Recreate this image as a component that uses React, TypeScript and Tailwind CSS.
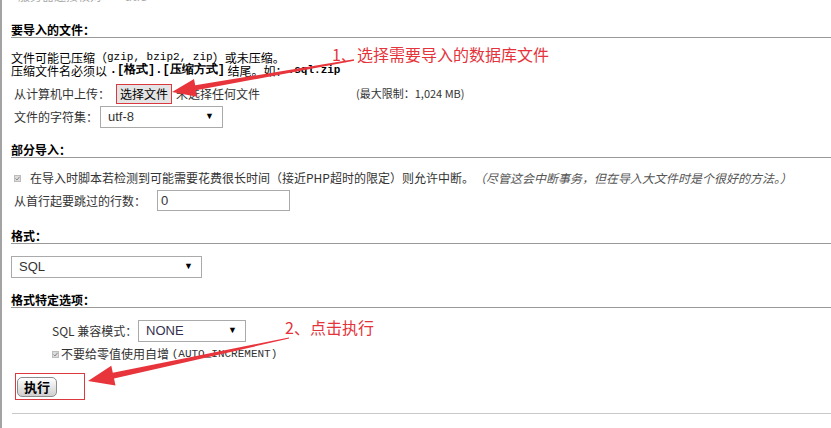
import React from 'react';

const sans = "font-['Noto_Sans_CJK_SC',sans-serif]";

function Heading({ children, className }: { children: React.ReactNode; className: string }) {
  return (
    <div className={`${className} h-[16px] border-b border-[#999] text-[12px] font-bold leading-[15px] text-black`}>
      {children}
    </div>
  );
}

function Select({ value, className }: { value: string; className: string }) {
  return (
    <div
      className={`${className} flex h-[22px] items-center justify-between border border-[#aaa] bg-white pl-[7px] pr-[8px] font-['Liberation_Sans',sans-serif] text-[13px] text-[#333]`}
    >
      <span>{value}</span>
      <span className="text-[9px] text-black">▼</span>
    </div>
  );
}

function Tick() {
  return (
    <span className="flex h-[7px] w-[7px] shrink-0 items-center justify-center border border-[#bdbdbd] bg-[#dcdcdc]">
      <svg width="5" height="5" viewBox="0 0 5 5">
        <path d="M0.5 2.5 L2 4 L4.5 0.8" stroke="#8a8a8a" strokeWidth="1" fill="none" />
      </svg>
    </span>
  );
}

export default function App() {
  return (
    <div className={`relative h-[428px] w-[831px] overflow-hidden border-l-2 border-[#a3a3a3] bg-white pl-[9px] text-[12px] text-[#222] ${sans}`}>
      {/* row cut off at the top edge */}
      <div className="h-[4px] overflow-hidden">
        <div className="-mt-[11px] h-[14px] pl-[7px] leading-[14px] text-[#aaa]">
          服务器连接校对 <span className="ml-[20px]">utf8</span>
        </div>
      </div>

      <Heading className="mt-[18px]">要导入的文件：</Heading>

      <div className="mt-[13px] leading-[13px] text-black">
        <div className="flex h-[13px] items-center whitespace-pre">
          文件可能已压缩（<span className="font-['Liberation_Mono',monospace] text-[11px]">gzip, bzip2, zip</span>）或未压缩。
        </div>
        <div className="flex h-[13px] items-center whitespace-pre">
          压缩文件名必须以 <span className="font-['Liberation_Mono',monospace] font-bold">.[格式].[压缩方式]</span> 结尾。如：
          <span className="font-['Liberation_Mono',monospace] text-[11px] font-bold">.sql.zip</span>
        </div>
      </div>

      <div className="mt-[6px] flex h-[21px] items-center pl-[3px] text-[#333]">
        <div className="flex w-[342px] items-center">
          <span className="w-[102px]">从计算机中上传：</span>
          <span className="flex h-[20px] items-center border border-[#d9393f] bg-[#e4e4e4] px-[3px] text-[12px] text-black">
            选择文件
          </span>
          <span className="ml-[4px]">未选择任何文件</span>
        </div>
        <span className="text-[11px] text-[#333]">(最大限制：1,024 MB)</span>
      </div>

      <div className="mt-[2px] flex h-[22px] items-center pl-[3px] text-[#333]">
        <span className="w-[86px]">文件的字符集：</span>
        <Select value="utf-8" className="w-[123px]" />
      </div>

      <Heading className="mt-[14px]">部分导入：</Heading>

      <div className="mt-[12px] flex h-[16px] items-center pl-[3px] text-[#333]">
        <Tick />
        <span className="ml-[9px]">在导入时脚本若检测到可能需要花费很长时间（接近PHP超时的限定）则允许中断。</span>
        <span className="italic text-[#555]">（尽管这会中断事务，但在导入大文件时是个很好的方法。）</span>
      </div>

      <div className="mt-[4px] flex h-[21px] items-center pl-[3px] text-[#333]">
        <span className="w-[143px]">从首行起要跳过的行数：</span>
        <div className="flex h-[21px] w-[133px] items-center border border-[#aaa] pl-[3px] font-['Liberation_Sans',sans-serif] text-[13px] text-[#333]">
          0
        </div>
      </div>

      <Heading className="mt-[17px]">格式：</Heading>

      <Select value="SQL" className="mt-[12px] w-[191px]" />

      <Heading className="mt-[14px]">格式特定选项：</Heading>

      <div className="mt-[12px] flex h-[22px] items-center pl-[41px] text-[#333]">
        <span className="w-[86px]">SQL 兼容模式：</span>
        <Select value="NONE" className="w-[108px] !text-[#33304f]" />
      </div>

      <div className="mt-[4px] flex h-[16px] items-center pl-[41px] text-[#333]">
        <Tick />
        <span className="ml-[2px] flex items-center whitespace-pre">
          不要给零值使用自增 <span className="font-['Liberation_Mono',monospace] text-[11px]">(AUTO_INCREMENT)</span>
        </span>
      </div>

      <div className="ml-[4px] mt-[11px] h-[27px] w-[70px] border border-[#d9393f] pl-[1px] pt-[3px]">
        <button className="flex h-[20px] w-[40px] items-center justify-center rounded-[5px] border border-[#8c8c8c] bg-gradient-to-b from-white to-[#cfcfcf] text-[13px] font-bold text-black">
          执行
        </button>
      </div>

      <div className="ml-[1px] mt-[13px] border-t border-[#c8c8c8]" />

      {/* annotations */}
      <div className="absolute left-[330px] top-[44px] text-[16px] leading-[20px] text-[#e5333b]">1、选择需要导入的数据库文件</div>
      <div className="absolute left-[283px] top-[317px] text-[16px] leading-[20px] text-[#e5333b]">2、点击执行</div>

      <svg className="pointer-events-none absolute left-0 top-0" width="831" height="428">
        <polygon
          points="170,92 195.2,96.7 194,90.3 352.1,60.7 351.9,59.3 193.2,85.3 192,78.9"
          fill="#e8343b"
        />
        <polygon
          points="86,381 113.5,385.4 112,378.5 287.1,338.6 286.9,337.4 110.8,372.7 109.3,365.8"
          fill="#e8343b"
        />
      </svg>
    </div>
  );
}
